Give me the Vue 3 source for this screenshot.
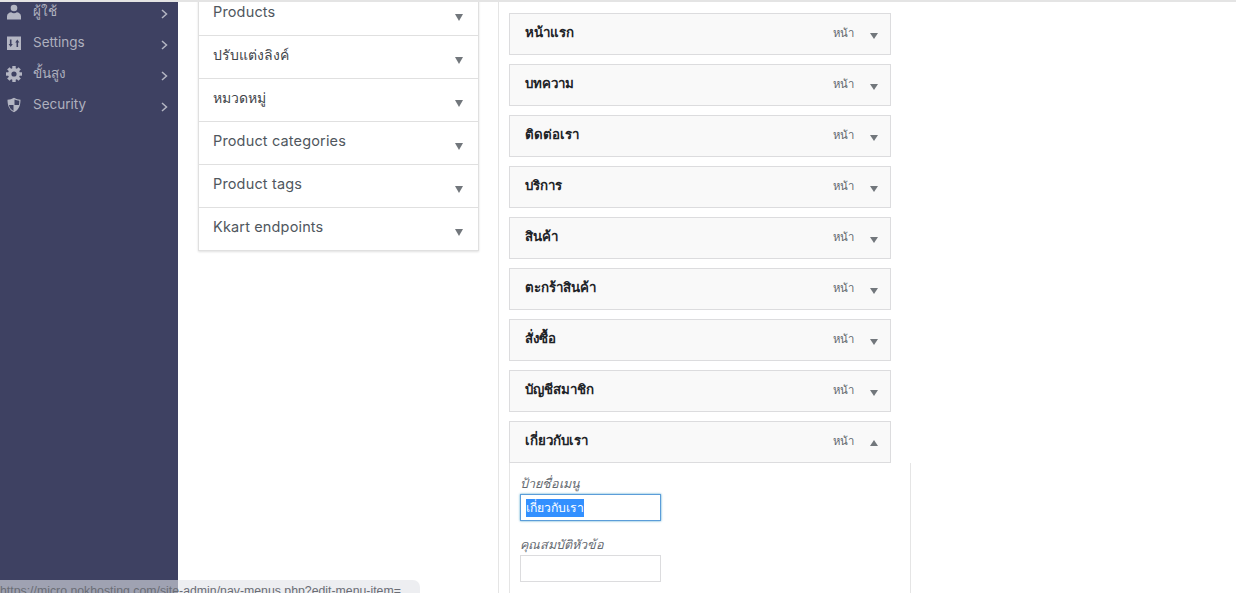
<script setup>
const side = [
  { label: 'ผู้ใช้', icon: 'user' },
  { label: 'Settings', icon: 'settings' },
  { label: 'ขั้นสูง', icon: 'gear' },
  { label: 'Security', icon: 'shield' }
]
const panels = [
  { label: 'Products', thai: false },
  { label: 'ปรับแต่งลิงค์', thai: true },
  { label: 'หมวดหมู่', thai: true },
  { label: 'Product categories', thai: false },
  { label: 'Product tags', thai: false },
  { label: 'Kkart endpoints', thai: false }
]
const items = ['หน้าแรก', 'บทความ', 'ติดต่อเรา', 'บริการ', 'สินค้า', 'ตะกร้าสินค้า', 'สั่งซื้อ', 'บัญชีสมาชิก']
const teeth = [0, 45, 90, 135, 180, 225, 270, 315]
</script>

<template>
  <div class="page">
    <aside class="sidebar">
      <div v-for="s in side" :key="s.label" class="side-row">
        <svg class="side-icon" viewBox="0 0 16 16" aria-hidden="true">
          <g v-if="s.icon === 'user'">
            <circle cx="8" cy="4" r="3.300" />
            <path d="M1 15.500v-3.300c0-2.300 2.300-3.700 4.200-3.900.8.600 1.800.9 2.800.9s2-.3 2.800-.9c1.900.2 4.200 1.600 4.200 3.900v3.300z" />
          </g>
          <path v-else-if="s.icon === 'settings'" fill-rule="evenodd" d="M1 1.500h14v13.500H1zM3.900 4.500v4.500H2.600l2.100 3 2.100-3H5.500V4.500zM10.500 12V7.500H9.200l2.100-3 2.100 3h-1.300V12z" />
          <g v-else-if="s.icon === 'gear'">
            <rect v-for="t in teeth" :key="t" x="6.300" y="0" width="3.400" height="4" :transform="`rotate(${t} 8 8)`" />
            <path fill-rule="evenodd" d="M8 2a6 6 0 1 0 0 12A6 6 0 0 0 8 2zM8 5.400a2.600 2.600 0 1 1 0 5.200 2.600 2.600 0 0 1 0-5.200z" />
          </g>
          <path v-else fill-rule="evenodd" d="M8 .8c2.100 1.300 4.200 1.900 6.500 1.900 0 5.800-1.700 10.300-6.500 12.500C3.200 13 1.500 8.500 1.500 2.700 3.800 2.700 5.900 2.100 8 .8zM8.500 2.600V8H3c.3 2.600 2 4.700 4.500 5.900V8H13c.2-1.100.3-2.200.3-4.200-1.700-.1-3.300-.5-4.800-1.200z" />
        </svg>
        <span class="side-label">{{ s.label }}</span>
        <svg class="side-chevron" viewBox="0 0 7 10" aria-hidden="true"><path d="M1 1l4.500 4L1 9" /></svg>
      </div>
    </aside>

    <main class="content">
      <section class="accordion">
        <div v-for="p in panels" :key="p.label" class="panel-row">
          <span class="panel-title" :class="{ thai: p.thai }">{{ p.label }}</span>
          <i class="arrow down"></i>
        </div>
      </section>

      <section class="menu">
        <div v-for="i in items" :key="i" class="item-bar">
          <b class="item-name">{{ i }}</b>
          <span class="item-type">หน้า</span>
          <i class="arrow down small"></i>
        </div>

        <div class="item-bar open">
          <b class="item-name">เกี่ยวกับเรา</b>
          <span class="item-type">หน้า</span>
          <i class="arrow up small"></i>
        </div>
        <div class="settings">
          <div class="field-label">ป้ายชื่อเมนู</div>
          <div class="field focused"><span class="selected">เกี่ยวกับเรา</span></div>
          <div class="field-label second">คุณสมบัติหัวข้อ</div>
          <div class="field"></div>
        </div>
      </section>
    </main>

    <div class="status">https://micro.nokhosting.com/site-admin/nav-menus.php?edit-menu-item=</div>
  </div>
</template>

<style>
html, body { margin: 0; background: #fff; overflow: hidden; }
</style>

<style scoped>
.page {
  position: relative;
  width: 1236px;
  height: 593px;
  overflow: hidden;
  display: flex;
  background: #fff;
  border-top: 2px solid #e4e4e4;
  box-sizing: border-box;
  font-family: Inter, "Noto Sans", sans-serif;
}
.sidebar {
  width: 178px;
  flex: none;
  background: #3e4162;
  color: #aeb0be;
}
.side-row {
  height: 31px;
  display: flex;
  align-items: center;
  padding: 0 10px 0 6px;
  box-sizing: border-box;
  position: relative;
  top: -6px;
}
.side-icon { width: 16px; height: 16px; fill: #b4b6c3; flex: none; }
.side-label { margin-left: 11px; font-size: 13.500px; flex: 1; position: relative; top: -1px; }
.side-chevron { width: 7px; height: 10px; fill: none; stroke: #b4b6c3; stroke-width: 1.500; margin-top: 4px; }

.content {
  flex: 1;
  display: flex;
  align-items: flex-start;
  min-width: 0;
}
.accordion {
  width: 281px;
  margin-left: 20px;
  margin-top: -9px;
  background: #fff;
  border: 1px solid #e0e0e0;
  border-top: 0;
  box-shadow: 0 1px 2px rgba(0, 0, 0, .12);
  box-sizing: border-box;
}
.panel-row {
  height: 43px;
  display: flex;
  align-items: center;
  justify-content: space-between;
  padding: 0 15px 0 14px;
  box-sizing: border-box;
  border-bottom: 1px solid #e0e0e0;
}
.panel-row:last-child { border-bottom: 0; height: 42px; }
.panel-title { font-size: 14.500px; letter-spacing: .15px; color: #50575e; position: relative; top: -3px; }
.panel-title.thai { font-size: 14px; letter-spacing: 0; top: -2px; color: #3f454a; }
.arrow { display: block; width: 0; height: 0; border-left: 4.500px solid transparent; border-right: 4.500px solid transparent; }
.arrow.down { border-top: 7px solid #72777c; margin-top: 7px; }
.arrow.up { border-bottom: 7px solid #72777c; margin-top: 2px; }
.arrow.small { border-left-width: 4px; border-right-width: 4px; border-top-width: 6px; border-bottom-width: 6px; }
.arrow.down.small { margin-top: 4px; }

.menu {
  align-self: stretch;
  margin-left: 19px;
  width: 738px;
  border-left: 1px solid #e5e5e5;
  padding: 11px 0 0 10px;
  box-sizing: border-box;
}
.item-bar {
  width: 382px;
  height: 42px;
  margin-bottom: 9px;
  display: flex;
  align-items: center;
  padding: 0 12px 0 15px;
  box-sizing: border-box;
  background: #f9f9f9;
  border: 1px solid #dcdcde;
}
.item-bar.open { margin-bottom: 0; }
.item-name { flex: 1; font-family: "Noto Sans", "Open Sans", sans-serif; font-size: 13.300px; font-weight: 700; color: #1d2327; position: relative; top: -2px; }
.item-type { font-family: "Noto Sans", "Open Sans", sans-serif; font-size: 11.300px; color: #646970; margin-right: 16px; position: relative; top: -1px; }
.settings {
  width: 402px;
  height: 140px;
  padding: 11px 0 0 10px;
  box-sizing: border-box;
  border-left: 1px solid #e5e5e5;
  border-right: 1px solid #e5e5e5;
}
.field-label { font-family: "Noto Sans", "Open Sans", sans-serif; font-size: 12.600px; font-style: italic; color: #646970; line-height: 20px; }
.field-label.second { margin-top: 13px; line-height: 21px; }
.field {
  width: 141px;
  height: 27px;
  box-sizing: border-box;
  border: 1px solid #dcdcde;
  display: flex;
  align-items: center;
  padding-left: 5px;
}
.field.focused { border-color: #5b9dd9; box-shadow: 0 0 2px rgba(30, 140, 190, .8); }
.selected { font-family: "Noto Sans", "Open Sans", sans-serif; font-size: 12.200px; line-height: 18px; background: #3390ff; color: #fff; }

.status {
  position: absolute;
  left: 0;
  bottom: 0;
  width: 420px;
  height: 13px;
  box-sizing: border-box;
  background: rgba(225, 227, 232, .6);
  border-top-right-radius: 7px;
  color: #6a6d75;
  font-family: "Liberation Sans", sans-serif;
  font-size: 12.300px;
  line-height: 23px;
  white-space: nowrap;
  overflow: hidden;
}
</style>
